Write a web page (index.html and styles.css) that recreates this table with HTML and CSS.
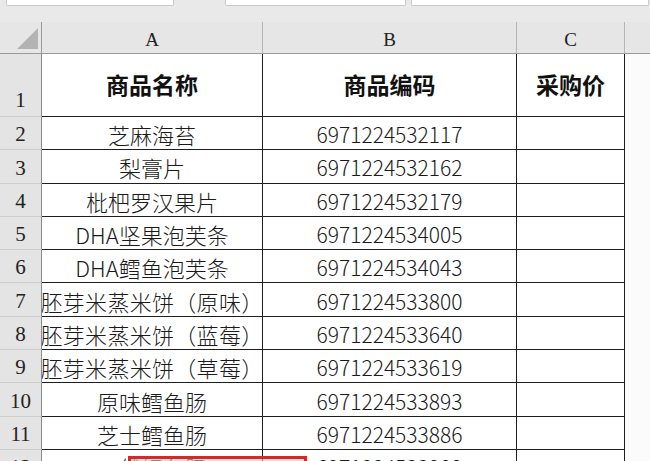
FILE: index.html
```html
<!DOCTYPE html>
<html lang="zh-CN">
<head>
<meta charset="utf-8">
<title>商品表</title>
<link rel="stylesheet" href="styles.css">
</head>
<body>
<div class="tabs">
  <div class="tab tab-1"></div>
  <div class="tab tab-2"></div>
  <div class="tab tab-3"></div>
</div>
<div class="sheet">
  <div class="corner"><span class="tri"></span></div>
  <div class="colhead">A</div>
  <div class="colhead">B</div>
  <div class="colhead">C</div>
  <div class="colhead last"></div>

  <div class="rowhead r1">1</div>
  <div class="cell head r1">商品名称</div>
  <div class="cell head r1">商品编码</div>
  <div class="cell head r1">采购价</div>
  <div class="blank"></div>

  <div class="rowhead">2</div><div class="cell">芝麻海苔</div><div class="cell num">6971224532117</div><div class="cell"></div><div class="blank"></div>
  <div class="rowhead">3</div><div class="cell">梨膏片</div><div class="cell num">6971224532162</div><div class="cell"></div><div class="blank"></div>
  <div class="rowhead">4</div><div class="cell">枇杷罗汉果片</div><div class="cell num">6971224532179</div><div class="cell"></div><div class="blank"></div>
  <div class="rowhead">5</div><div class="cell">DHA坚果泡芙条</div><div class="cell num">6971224534005</div><div class="cell"></div><div class="blank"></div>
  <div class="rowhead">6</div><div class="cell">DHA鳕鱼泡芙条</div><div class="cell num">6971224534043</div><div class="cell"></div><div class="blank"></div>
  <div class="rowhead">7</div><div class="cell"><span>胚芽米蒸米饼（原味）</span></div><div class="cell num">6971224533800</div><div class="cell"></div><div class="blank"></div>
  <div class="rowhead">8</div><div class="cell"><span>胚芽米蒸米饼（蓝莓）</span></div><div class="cell num">6971224533640</div><div class="cell"></div><div class="blank"></div>
  <div class="rowhead">9</div><div class="cell"><span>胚芽米蒸米饼（草莓）</span></div><div class="cell num">6971224533619</div><div class="cell"></div><div class="blank"></div>
  <div class="rowhead">10</div><div class="cell">原味鳕鱼肠</div><div class="cell num">6971224533893</div><div class="cell"></div><div class="blank"></div>
  <div class="rowhead">11</div><div class="cell">芝士鳕鱼肠</div><div class="cell num">6971224533886</div><div class="cell"></div><div class="blank"></div>
  <div class="rowhead">12</div><div class="cell">天然鳕鱼肠</div><div class="cell num">6971224533909</div><div class="cell"></div><div class="blank"></div>
</div>
<div class="mark"></div>
</body>
</html>
```

FILE: styles.css
```css
html, body {
  margin: 0;
  padding: 0;
  background: #e9e9e9;
  overflow: hidden;
  height: 461px;
}

.tabs {
  display: flex;
  align-items: flex-start;
  height: 22px;
  padding-left: 6px;
  box-sizing: border-box;
}
.tab {
  height: 5px;
  background: #ffffff;
  border: 1px solid #c9c9c9;
  border-top: none;
  border-radius: 0 0 2px 2px;
}
.tab-1 { width: 166px; }
.tab-2 { width: 179px; margin-left: 51px; }
.tab-3 { width: 236px; margin-left: 5px; }

.sheet {
  display: grid;
  grid-template-columns: 42px 221px 254px 108px 1fr;
  grid-template-rows: 32px 63px repeat(11, 33.3px);
  background: #ffffff;
}

.corner, .colhead {
  background: #e6e6e6;
  border-bottom: 1px solid #9a9a9a;
  border-right: 1px solid #b5b5b5;
  box-sizing: border-box;
}
.corner {
  display: flex;
  justify-content: flex-end;
  align-items: flex-end;
  padding: 0 3px 4px 0;
  border-right-color: #9a9a9a;
}
.tri {
  width: 21px;
  height: 21px;
  background: #b3b3b3;
  clip-path: polygon(100% 0, 100% 100%, 0 100%);
}
.colhead {
  display: flex;
  align-items: center;
  justify-content: center;
  padding-top: 4px;
  font-family: "Liberation Serif", "Noto Sans CJK SC", serif;
  font-size: 19px;
  color: #222;
}
.colhead.last { border-right: none; }

.rowhead {
  background: #e4e4e4;
  border-right: 1px solid #8c8c8c;
  border-bottom: 1px solid #cdcdcd;
  box-sizing: border-box;
  display: flex;
  align-items: flex-end;
  justify-content: center;
  padding-bottom: 2px;
  font-family: "Liberation Serif", serif;
  font-size: 21px;
  color: #222;
}
.rowhead.r1 { padding-bottom: 3px; }

.cell {
  border-right: 1px solid #1e1e1e;
  border-bottom: 1px solid #1e1e1e;
  box-sizing: border-box;
  display: flex;
  align-items: center;
  justify-content: center;
  overflow: hidden;
  white-space: nowrap;
  padding-top: 2px;
  font-family: "Noto Sans CJK SC", "Noto Sans", sans-serif;
  font-weight: 300;
  font-size: 22px;
  color: #1a1a1a;
}
.cell span { flex: none; letter-spacing: 0.3px; }
.cell.num {
  font-size: 21px;
}
.cell.head {
  font-weight: 700;
  font-size: 23px;
  color: #111;
  padding-top: 0;
  padding-bottom: 2px;
}

.blank {
  background: #fbfbfb;
}

.mark {
  position: absolute;
  left: 128px;
  top: 456px;
  width: 179px;
  height: 20px;
  border: 3px solid #d9262a;
  box-sizing: border-box;
  background: rgba(200, 200, 200, 0.6);
}
```
